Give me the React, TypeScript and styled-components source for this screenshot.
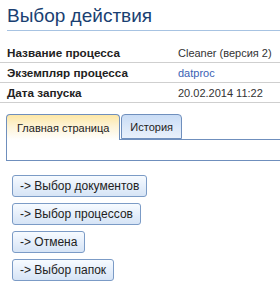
import React from 'react'
import styled, { createGlobalStyle } from 'styled-components'

const GlobalStyle = createGlobalStyle`
  html, body {
    margin: 0;
    padding: 0;
    background: #ffffff;
    overflow: hidden;
  }
  body {
    font-family: 'Liberation Sans', Arial, sans-serif;
    color: #333333;
  }
`

const Page = styled.div`
  width: 280px;
  height: 291px;
  overflow: hidden;
`

const Title = styled.h1`
  margin: 4px 0 0 7px;
  padding: 0 0 2px;
  font-size: 19px;
  line-height: 24px;
  font-weight: normal;
  color: #1a3f72;
  border-bottom: 1px solid #a7c3e2;
`

const InfoTable = styled.div`
  margin-top: 12px;
  display: flex;
  flex-direction: column;
`

const InfoRow = styled.div`
  display: grid;
  grid-template-columns: 171px 1fr;
  height: 19px;
  align-items: center;
  padding-left: 7px;
  border-bottom: 1px solid #cfcfcf;
`

const Label = styled.span`
  font-size: 11.7px;
  font-weight: bold;
  color: #222222;
`

const Value = styled.span<{ $link?: boolean }>`
  font-size: 11px;
  color: ${p => (p.$link ? '#3a62b4' : '#333333')};
  white-space: nowrap;
`

const Tabs = styled.div`
  margin: 11px -20px 0 6px;
`

const TabStrip = styled.div`
  display: flex;
  align-items: flex-end;
  height: 25px;
  border-bottom: 1px solid #6f8fbd;
`

const Tab = styled.div<{ $active?: boolean }>`
  box-sizing: border-box;
  height: ${p => (p.$active ? '26px' : '25px')};
  margin-bottom: ${p => (p.$active ? '-1px' : '0')};
  padding: 0 ${p => (p.$active ? '10px' : '8px')};
  display: flex;
  align-items: center;
  font-size: 11px;
  color: #222222;
  border: 1px solid #6f8fbd;
  border-bottom: ${p => (p.$active ? 'none' : '1px solid #6f8fbd')};
  border-radius: 4px 4px 0 0;
  background: ${p =>
    p.$active
      ? 'linear-gradient(to bottom, #fde7a6 0%, #fdf3d6 45%, #ffffff 100%)'
      : 'linear-gradient(to bottom, #c9dcf5 0%, #dde9f9 60%, #e8f0fb 100%)'};
  & + & {
    margin-left: 1px;
  }
`

const TabPanel = styled.div`
  height: 20px;
  border: 1px solid #6f8fbd;
  border-top: none;
`

const Actions = styled.div`
  margin: 14px 0 0 12px;
  display: flex;
  flex-direction: column;
  align-items: flex-start;
  gap: 6px;
`

const ActionButton = styled.button`
  box-sizing: border-box;
  height: 22px;
  padding: 0 7px;
  font-family: 'Liberation Sans', Arial, sans-serif;
  font-size: 12px;
  color: #222222;
  border: 1px solid #7b9bc6;
  border-radius: 3px;
  background: linear-gradient(to bottom, #f7fbff 0%, #e6effb 50%, #d6e4f6 100%);
  cursor: pointer;
`

const info = [
  { label: 'Название процесса', value: 'Cleaner (версия 2)' },
  { label: 'Экземпляр процесса', value: 'datproc', link: true },
  { label: 'Дата запуска', value: '20.02.2014 11:22' },
]

const actions = ['Выбор документов', 'Выбор процессов', 'Отмена', 'Выбор папок']

export default function App() {
  return (
    <Page>
      <GlobalStyle />
      <Title>Выбор действия</Title>
      <InfoTable>
        {info.map(row => (
          <InfoRow key={row.label}>
            <Label>{row.label}</Label>
            <Value $link={row.link}>{row.value}</Value>
          </InfoRow>
        ))}
      </InfoTable>
      <Tabs>
        <TabStrip>
          <Tab $active>Главная страница</Tab>
          <Tab>История</Tab>
        </TabStrip>
        <TabPanel />
      </Tabs>
      <Actions>
        {actions.map(a => (
          <ActionButton key={a}>{'-> ' + a}</ActionButton>
        ))}
      </Actions>
    </Page>
  )
}
